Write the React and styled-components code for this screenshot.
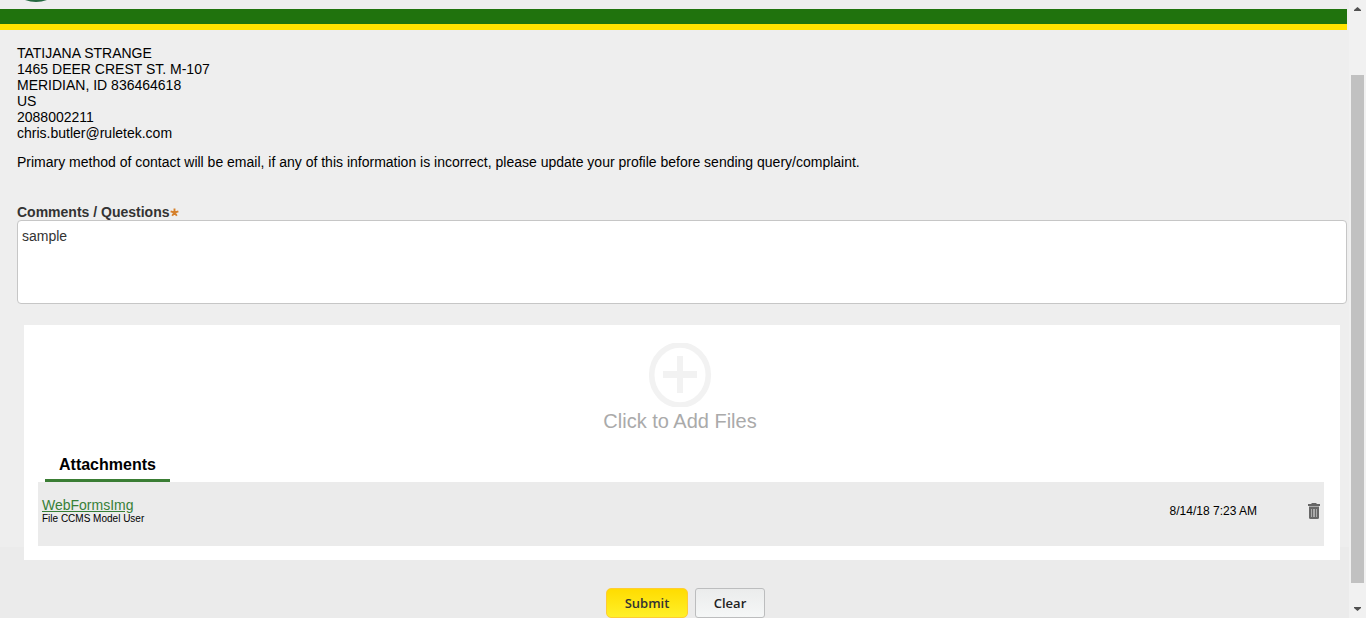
import React, { useState } from "react";
import styled, { createGlobalStyle, css } from "styled-components";

const GlobalStyle = createGlobalStyle`
  *, *::before, *::after { box-sizing: border-box; }
  body {
    margin: 0;
    background: #eeeeee;
    color: #000;
    font-family: "Liberation Sans", Arial, sans-serif;
    font-size: 14px;
    line-height: 16px;
  }
`;

const Shell = styled.div`
  display: grid;
  grid-template-columns: minmax(0, 1fr) 17px;
  min-height: 100vh;
  background: linear-gradient(#eeeeee 547px, #ebebeb 547px);
`;

const Page = styled.div`
  display: flex;
  flex-direction: column;
  padding-right: 2px;
`;

const Header = styled.header`
  height: 30px;
  padding-left: 22px;
  border-bottom: 6px solid #ffe200;
  background: linear-gradient(#eeeeee 9px, #20730d 9px);
`;

const LogoEdge = styled.svg`
  display: block;
`;

const Content = styled.main`
  padding: 15px 0 0 17px;
`;

const Address = styled.address`
  font-style: normal;
`;

const Line = styled.div``;

const Notice = styled.p`
  margin: 13px 0 0;
`;

const Field = styled.div`
  display: flex;
  flex-direction: column;
  margin-top: 34px;
`;

const Label = styled.label`
  display: flex;
  align-items: center;
  gap: 1px;
  color: #333;
  font-weight: bold;
`;

const Comments = styled.textarea`
  display: block;
  width: 100%;
  height: 84px;
  padding: 7px 4px;
  border: 1px solid #c6c6c6;
  border-radius: 4px;
  background: #fff;
  color: #333;
  font: 14px/16px "Liberation Sans", Arial, sans-serif;
  resize: none;
  outline: none;
`;

const Files = styled.section`
  display: flex;
  flex-direction: column;
  margin: 21px 7px 0;
  padding: 18px 16px 14px 14px;
  background: #fff;
`;

const AddFiles = styled.button`
  display: flex;
  flex-direction: column;
  align-items: center;
  align-self: center;
  padding: 0;
  border: 0;
  background: none;
  color: #aaa;
  font: 20px/24px "Liberation Sans", Arial, sans-serif;
  margin-right: 2px;
  cursor: pointer;
`;

const PlusIcon = styled.svg`
  display: block;
  margin-bottom: 2px;
`;

const TabTitle = styled.h2`
  align-self: flex-start;
  margin: 20px 0 0 7px;
  padding: 3px 14px 5px;
  border-bottom: 3px solid #3a7d34;
  font-size: 16px;
  line-height: 18px;
`;

const Attachment = styled.div`
  display: grid;
  grid-template-columns: minmax(0, 1fr) auto auto;
  align-items: start;
  height: 64px;
  padding: 15px 4px 0;
  background: #ebebeb;
`;

const FileLink = styled.a`
  display: block;
  color: #378038;
`;

const FileType = styled.div`
  font-size: 10px;
  line-height: 12px;
`;

const FileDate = styled.time`
  margin: 6px 51px 0 0;
  font-size: 12px;
  line-height: 16px;
`;

const DeleteButton = styled.button`
  display: block;
  margin-top: 6px;
  padding: 0;
  border: 0;
  background: none;
  cursor: pointer;
`;

const Actions = styled.div`
  display: flex;
  justify-content: center;
  gap: 7px;
  margin: 28px 0 0 24px;
`;

const ActionButton = styled.button`
  height: 30px;
  min-width: 70px;
  padding: 0 16px;
  border: 1px solid #bcbdbe;
  border-radius: 3px;
  background: linear-gradient(#ebecec, #f5f7f7);
  color: #222;
  font: 600 13px/16px "Open Sans", "Liberation Sans", sans-serif;
  cursor: pointer;
  ${(p) =>
    p.$primary &&
    css`
      min-width: 82px;
      border-color: #ffcc33;
      border-radius: 5px;
      background: linear-gradient(#ffdc00, #fff029);
      color: #333;
    `}
`;

const ScrollTrack = styled.div`
  display: flex;
  flex-direction: column;
  padding: 0 2px;
  background: #f1f1f1;
`;

const ScrollArrow = styled.svg`
  display: block;
  flex: none;
`;

const ScrollSpace = styled.div`
  flex: ${(p) => p.$share} 0 0;
`;

const ScrollThumb = styled.div`
  flex: 508 0 0;
  background: #c1c1c1;
`;

const addressLines = [
  "TATIJANA STRANGE",
  "1465 DEER CREST ST. M-107",
  "MERIDIAN, ID 836464618",
  "US",
  "2088002211",
  "chris.butler@ruletek.com",
];

export default function App() {
  const [comments, setComments] = useState("sample");
  return (
    <>
      <GlobalStyle />
      <Shell>
        <Page>
          <Header>
            <LogoEdge width="28" height="2" viewBox="0 0 28 2" aria-hidden="true">
              <path d="M3 0H25Q14 4 3 0Z" fill="#24683f" />
            </LogoEdge>
          </Header>
          <Content>
            <Address>
              {addressLines.map((line) => (
                <Line key={line}>{line}</Line>
              ))}
            </Address>
            <Notice>
              Primary method of contact will be email, if any of this information is
              incorrect, please update your profile before sending query/complaint.
            </Notice>
            <Field>
              <Label htmlFor="comments">
                Comments / Questions
                <svg width="9" height="10" viewBox="0 0 9 10" aria-hidden="true">
                  <path
                    d="M4.5 5.5V1.5M4.5 5.5L0.6 4.3M4.5 5.5L8.4 4.3M4.5 5.5L2.2 8.8M4.5 5.5L6.8 8.8"
                    stroke="#d5802b"
                    strokeWidth="1.9"
                  />
                </svg>
              </Label>
              <Comments
                id="comments"
                required
                value={comments}
                onChange={(e) => setComments(e.target.value)}
              />
            </Field>
            <Files>
              <AddFiles type="button">
                <PlusIcon width="64" height="64" viewBox="0 0 64 64" aria-hidden="true">
                  <ellipse cx="32" cy="32" rx="28.3" ry="30" fill="none" stroke="#f2f2f2" strokeWidth="5.6" />
                  <path d="M29 13h6v15h14v7H35v15h-6V35H15v-7h14z" fill="#f2f2f2" />
                </PlusIcon>
                Click to Add Files
              </AddFiles>
              <TabTitle>Attachments</TabTitle>
              <Attachment>
                <div>
                  <FileLink href="#file">WebFormsImg</FileLink>
                  <FileType>File CCMS Model User</FileType>
                </div>
                <FileDate>8/14/18 7:23 AM</FileDate>
                <DeleteButton type="button" aria-label="Delete attachment">
                  <svg width="12" height="16" viewBox="0 0 12 16" aria-hidden="true">
                    <path d="M0 1h3l1-1h4l1 1h3v2H0z" fill="#666" />
                    <path
                      d="M1 4h10V14.5Q11 16 9.5 16h-7Q1 16 1 14.5z"
                      fill="#686868"
                    />
                    <path d="M3 6h1v8H3zM5 6h2v8H5zM8 6h1v8H8z" fill="#ababab" />
                    <path d="M1 3h10v1H1z" fill="#aaa" />
                  </svg>
                </DeleteButton>
              </Attachment>
            </Files>
          </Content>
          <Actions>
            <ActionButton type="submit" $primary>
              Submit
            </ActionButton>
            <ActionButton type="button" onClick={() => setComments("")}>
              Clear
            </ActionButton>
          </Actions>
        </Page>
        <ScrollTrack aria-hidden="true">
          <ScrollArrow width="13" height="17" viewBox="0 0 13 17">
            <path d="M3 11V10L6.5 7L10 10V11Z" fill="#505050" />
          </ScrollArrow>
          <ScrollSpace $share={58} />
          <ScrollThumb />
          <ScrollSpace $share={18} />
          <ScrollArrow width="13" height="17" viewBox="0 0 13 17">
            <path d="M3 6V7L6.5 10L10 7V6Z" fill="#505050" />
          </ScrollArrow>
        </ScrollTrack>
      </Shell>
    </>
  );
}
